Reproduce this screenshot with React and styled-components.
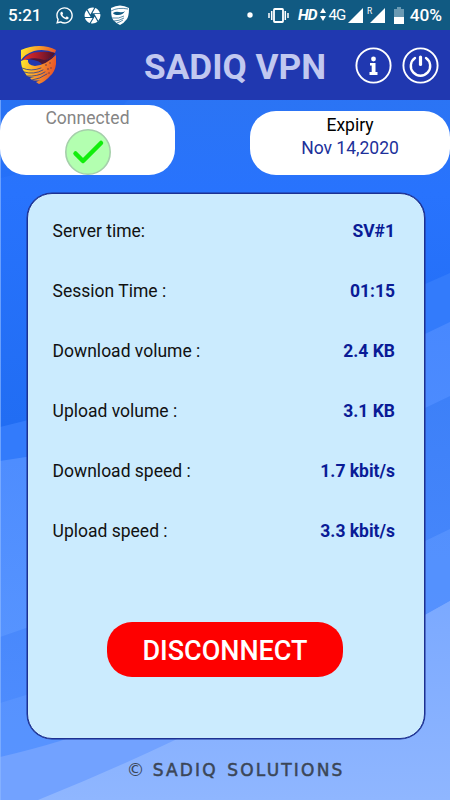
import React from 'react'
import styled, { createGlobalStyle } from 'styled-components'
import { FaWhatsapp } from 'react-icons/fa'
import { MdCamera } from 'react-icons/md'

const GlobalStyle = createGlobalStyle`
  * {
    box-sizing: border-box;
  }
  body {
    margin: 0;
    font-family: Roboto, 'Liberation Sans', sans-serif;
  }
`

const Screen = styled.div`
  position: relative;
  width: 450px;
  height: 800px;
  overflow: hidden;
  display: flex;
  flex-direction: column;
  isolation: isolate;
  background: #2472fb;
`

const Waves = styled.svg`
  position: absolute;
  inset: 0;
  z-index: -1;
`

const StatusBar = styled.div`
  height: 30px;
  flex: none;
  display: flex;
  align-items: center;
  justify-content: space-between;
  padding: 0 8px;
  color: white;
  background: #115a82;
`

const StatusGroup = styled.div`
  display: flex;
  align-items: center;
  height: 30px;

  > svg {
    display: block;
    flex: none;
  }
`

const StatusText = styled.span`
  font-size: ${(props) => props.size || 18}px;
  font-weight: ${(props) => props.weight || 500};
  font-style: ${(props) => (props.$italic ? 'italic' : 'normal')};
  letter-spacing: ${(props) => props.$spacing || 0}px;
  line-height: 30px;
  margin-left: ${(props) => props.$gap || 0}px;
  white-space: nowrap;
`

const Glyph = styled.span`
  display: inline-flex;
  margin-left: ${(props) => props.$gap || 0}px;
`

const Header = styled.header`
  height: 70px;
  flex: none;
  display: flex;
  align-items: center;
  padding: 0 11px 0 20px;
  background: #2038b0;
`

const Title = styled.h1`
  margin: 0 30px 0 auto;
  width: 181px;
  font-size: 35.2px;
  font-weight: 700;
  line-height: 42px;
  padding-top: 4px;
  white-space: nowrap;
  color: #c1c8f0;
`

const IconButton = styled.button`
  width: 37px;
  height: 37px;
  padding: 0;
  border: 0;
  background: none;
  & + & {
    margin-left: 10px;
  }
  svg {
    display: block;
  }
`

const Badges = styled.div`
  height: 93px;
  flex: none;
  display: flex;
  justify-content: space-between;
  align-items: flex-end;
  padding-bottom: 18px;
`

const Badge = styled.div`
  width: ${(props) => props.width}px;
  height: ${(props) => props.height}px;
  border-radius: 26px;
  display: flex;
  flex-direction: column;
  align-items: center;
  background: white;
  font-size: 17.5px;
  line-height: 23px;
  padding-top: ${(props) => props.$top || 0}px;
`

const State = styled.span`
  color: #858585;
  height: 24px;
  line-height: 27px;
`

const ExpiryDate = styled.span`
  color: #20309a;
`

const Panel = styled.main`
  width: 398px;
  height: 546px;
  flex: none;
  margin-left: 26.5px;
  padding: 7px 28.5px 0 25.1px;
  display: flex;
  flex-direction: column;
  border: 1px solid #1d3192;
  box-shadow: 0 0 0 0.5px #1d3192;
  border-radius: 25px;
  background: #cbebfe;
`

const Row = styled.div`
  height: 60px;
  display: flex;
  align-items: center;
  justify-content: space-between;
  padding-bottom: 1px;
  font-size: 17.5px;
  color: #111;
`

const Value = styled.span`
  font-weight: 700;
  color: #0a1b96;
`

const Disconnect = styled.button`
  width: 236px;
  height: 55px;
  margin: 61px 0 0 54.4px;
  padding: 2px 0 0;
  border: 0;
  border-radius: 25px;
  background: #fe0000;
  color: white;
  font-family: inherit;
  font-size: 27px;
  font-weight: 500;
`

const Footer = styled.footer`
  flex: 1;
  display: flex;
  align-items: center;
  justify-content: center;
  padding-left: 21px;
  font-family: 'DejaVu Sans', sans-serif;
  font-size: 17px;
  letter-spacing: 2.2px;
  word-spacing: 1.8px;
  white-space: nowrap;
  color: #3b4657;
  -webkit-text-stroke: 0.5px #3b4657;
`

const Copyright = styled.span`
  font-size: 18px;
  -webkit-text-stroke: 0;
  margin-right: 6px;
`

const stats = [
  { label: 'Server time:', value: 'SV#1' },
  { label: 'Session Time :', value: '01:15' },
  { label: 'Download volume :', value: '2.4 KB' },
  { label: 'Upload volume :', value: '3.1 KB' },
  { label: 'Download speed :', value: '1.7 kbit/s' },
  { label: 'Upload speed :', value: '3.3 kbit/s' }
]

const Background = () => (
  <Waves width='450' height='800' viewBox='0 0 450 800'>
    <defs>
      <linearGradient id='sky' x1='0' y1='0' x2='0' y2='1'>
        <stop offset='0.12' stopColor='#2b74f4' />
        <stop offset='0.24' stopColor='#2873fd' />
        <stop offset='0.53' stopColor='#216df3' />
      </linearGradient>
      <linearGradient id='mid' x1='0' y1='0' x2='0' y2='1'>
        <stop offset='0' stopColor='#4888fe' />
        <stop offset='1' stopColor='#5d99ff' />
      </linearGradient>
      <linearGradient id='deep' x1='0' y1='0' x2='0' y2='1'>
        <stop offset='0' stopColor='#3d80f8' />
        <stop offset='1' stopColor='#528fff' />
      </linearGradient>
      <linearGradient id='pale' x1='0' y1='0' x2='0' y2='1'>
        <stop offset='0' stopColor='#7ba9ff' />
        <stop offset='1' stopColor='#8fb6ff' />
      </linearGradient>
    </defs>
    <rect width='450' height='800' fill='url(#sky)' />
    <path d='M0 178C60 165 100 130 128 100H0Z' fill='#1b68ee' opacity='0.25' />
    <path d='M0 427Q26 421 52 413L425 284L450 273V800H0Z' fill='#337bfb' />
    <path d='M0 461L26 457Q240 410 425 334L450 322V800H0Z' fill='url(#mid)' />
    <path d='M0 637L26 628L425 408L450 396V800H0Z' fill='url(#deep)' />
    <path d='M0 703L26 695L425 541L450 529V800H0Z' fill='#5c97ff' opacity='0.65' />
    <path d='M0 757Q34 749 60 741L425 615L450 601V800H0Z' fill='#72a2ff' />
    <path d='M38 800Q110 771 175 740L425 615L450 601V800Z' fill='url(#pale)' />
    <rect width='1' height='700' y='100' fill='#8db8ff' opacity='0.65' />
  </Waves>
)

const Logo = () => (
  <svg width='37' height='40' viewBox='0 0 37 40'>
    <defs>
      <linearGradient id='gold' x1='0' y1='0' x2='1' y2='0.2'>
        <stop offset='0' stopColor='#fff02c' />
        <stop offset='0.5' stopColor='#faa02c' />
        <stop offset='1' stopColor='#e8582a' />
      </linearGradient>
      <linearGradient id='ember' x1='0' y1='0' x2='1' y2='0'>
        <stop offset='0' stopColor='#ee3026' />
        <stop offset='0.5' stopColor='#a51c2a' />
        <stop offset='1' stopColor='#43122e' />
      </linearGradient>
    </defs>
    <path d='M1 5Q10 1 19 1Q29 1 36 5L35 8Q24 3 14 6Q5 9 1 15Z' fill='url(#gold)' />
    <path d='M2 16Q8 7 19 7Q28 6 35 8Q32 14 23 16Q11 11 2 16Z' fill='url(#ember)' />
    <path d='M9 14Q16 12 24 15Q30 15 35 9Q31 18 22 20Q22 16 9 14Z' fill='#4a1738' />
    {/* lower half tapers to the tip in separate blades */}
    <path d='M1 16Q5 14 8 15Q7 20 15 21Q26 20 36 10L36 19Q35 27 30 31Q26 36 19 39L16 37L21 35Q17 36 12 35L10 33L16 32Q11 33 7 31L5 28Q1 23 1 16Z' fill='url(#gold)' />
    <g fill='none' stroke='#263a90' strokeWidth='0.8' strokeLinecap='round'>
      <path d='M2 23Q11 27 21 23' />
      <path d='M4 27Q14 30 23 25' />
      <path d='M7 31Q17 32 25 27' />
      <path d='M12 35Q20 34 27 29' />
    </g>
    <g fill='#5a3150'>
      <circle cx='26' cy='20' r='0.8' />
      <circle cx='30' cy='18' r='0.7' />
      <circle cx='28' cy='24' r='0.8' />
      <circle cx='31' cy='23' r='0.7' />
      <circle cx='29' cy='28' r='0.7' />
    </g>
  </svg>
)

const ShieldIcon = () => (
  <svg width='18' height='20' viewBox='0 0 18 20'>
    <path d='M0 3Q9-2 18 3Q18 11 16 14Q13 18 9 20Q3 17 1 13Q0 9 0 3Z' fill='white' />
    <path d='M2 8Q5 6 8 7Q12 8 14 6Q12 10 7 10Q3 10 2 8Z' fill='#115a82' />
    <g fill='none' stroke='#115a82' strokeWidth='0.7'>
      <path d='M0 6Q7 2 17 4' />
      <path d='M1 13Q8 14 13 11' />
      <path d='M3 16Q8 16 13 13' />
      <path d='M6 18Q9 17 12 15' />
    </g>
  </svg>
)

const App = () => (
  <>
    <GlobalStyle />
    <Screen>
      <Background />
      <StatusBar>
        <StatusGroup>
          <StatusText size={17} weight={500}>5:21</StatusText>
          <Glyph $gap={14}><FaWhatsapp size={19} /></Glyph>
          <Glyph $gap={8.5}><MdCamera size={19} /></Glyph>
          <Glyph $gap={9}><ShieldIcon /></Glyph>
        </StatusGroup>
        <StatusGroup>
          <svg width='6' height='6'><circle cx='3' cy='3' r='2.7' fill='white' /></svg>
          <Glyph $gap={14.5}>
            <svg width='21' height='15' viewBox='0 0 21 15' fill='none' stroke='white' strokeWidth='1.5'>
              <rect x='6' y='1' width='9' height='13' rx='0.8' strokeWidth='1.8' />
              <path d='M3.7 3V12M1 5V10M17.3 3V12M20 5V10' />
            </svg>
          </Glyph>
          <StatusText size={15.5} weight={700} $italic $gap={9.5} $spacing={-1}>HD</StatusText>
          <Glyph $gap={4}>
            <svg width='6' height='14' viewBox='0 0 6 14' fill='white'>
              <path d='M3 0L6 5H0ZM3 13L0 8H6Z' />
            </svg>
          </Glyph>
          <StatusText size={15} weight={400} $gap={2} $spacing={-1}>4G</StatusText>
          <Glyph $gap={3}>
            <svg width='15' height='15'><path d='M15 0V15H0Z' fill='white' /></svg>
          </Glyph>
          <Glyph $gap={4}>
            <svg width='18' height='19' viewBox='0 0 18 19'>
              <path d='M18 2V17H3Z' fill='white' />
              <text x='0' y='8' fontSize='8.5' fill='white' fontFamily='Roboto'>R</text>
            </svg>
          </Glyph>
          <Glyph $gap={8.5}>
            <svg width='10' height='17' viewBox='0 0 10 17'>
              <path d='M3 0H7V2H10V17H0V2H3Z' fill='#6a9ab3' />
              <path d='M0 10H10V17H0Z' fill='white' />
            </svg>
          </Glyph>
          <StatusText size={17.3} $gap={6}>40%</StatusText>
        </StatusGroup>
      </StatusBar>

      <Header>
        <Logo />
        <Title>SADIQ VPN</Title>
        <IconButton>
          <svg width='37' height='37' viewBox='0 0 37 37'>
            <circle cx='18.5' cy='18.5' r='17.1' fill='none' stroke='white' strokeWidth='1.9' />
            <circle cx='18.5' cy='12' r='2.4' fill='white' />
            <path d='M15 16H20.5V25H22.5V28H14.5V25H16.7V18.5H15Z' fill='white' />
          </svg>
        </IconButton>
        <IconButton>
          <svg width='37' height='37' viewBox='0 0 37 37' fill='none' stroke='white' strokeLinecap='round'>
            <circle cx='18.5' cy='18.5' r='17.1' strokeWidth='1.9' />
            <path d='M13 11A9.7 9.7 0 1 0 24 11' strokeWidth='2.4' />
            <path d='M18.5 10V17.5' strokeWidth='3.2' />
          </svg>
        </IconButton>
      </Header>

      <Badges>
        <Badge width={175} height={70}>
          <State>Connected</State>
          <svg width='46' height='46' viewBox='0 0 46 46'>
            <circle cx='23' cy='23' r='22.2' fill='#b3ffb0' stroke='#a5cfaa' strokeWidth='1.6' />
            <path d='M10.5 24.5L18 32L36 14' fill='none' stroke='#12ee0c' strokeWidth='4.5' strokeLinecap='round' strokeLinejoin='round' />
          </svg>
        </Badge>
        <Badge width={200} height={64} $top={3}>
          <span>Expiry</span>
          <ExpiryDate>Nov 14,2020</ExpiryDate>
        </Badge>
      </Badges>

      <Panel>
        {stats.map((item) => (
          <Row key={item.label}>
            <span>{item.label}</span>
            <Value>{item.value}</Value>
          </Row>
        ))}
        <Disconnect>DISCONNECT</Disconnect>
      </Panel>

      <Footer>
        <Copyright>©</Copyright>
        SADIQ SOLUTIONS
      </Footer>
    </Screen>
  </>
)

export default App
